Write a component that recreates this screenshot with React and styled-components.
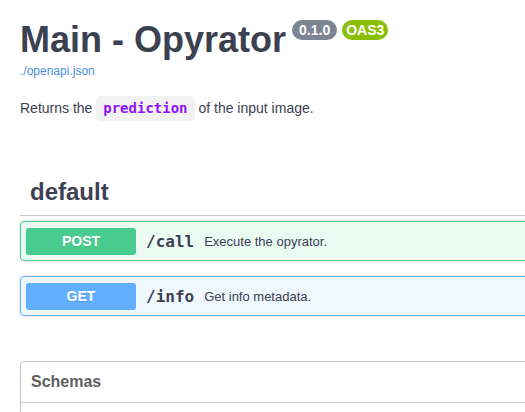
import React from "react";
import styled, { createGlobalStyle } from "styled-components";

const GlobalStyle = createGlobalStyle`
    html, body {
        margin: 0;
        padding: 0;
        background: #fff;
        overflow: hidden;
    }
    body {
        font-family: "Liberation Sans", Arial, sans-serif;
        color: #3b4151;
    }
`;

const Page = styled.div`
    width: 640px;
    padding: 0 20px;
    box-sizing: border-box;
`;

const Info = styled.div`
    padding-top: 20px;
`;

const Title = styled.h2`
    margin: 0;
    font-size: 36px;
    font-weight: 700;
    line-height: 40px;
    color: #3b4151;
    display: flex;
    align-items: flex-start;
`;

const Badge = styled.span`
    display: inline-block;
    margin: 0 0 0 5px;
    padding: 0 ${(props) => props.pad}px;
    height: 20px;
    line-height: 20px;
    border-radius: 57px;
    background: ${(props) => props.bg};
    color: #fff;
    font-size: 14px;
    font-weight: 700;
`;

const SpecLink = styled.a`
    display: block;
    margin-top: 4px;
    font-size: 12px;
    color: #4990e2;
    text-decoration: none;
`;

const Description = styled.p`
    margin: 18px 0 0;
    font-size: 14px;
    line-height: 25px;
    color: #3b4151;
`;

const Code = styled.code`
    display: inline-block;
    padding: 0 7px;
    border-radius: 4px;
    background: rgba(0, 0, 0, 0.05);
    color: #9012fe;
    font-family: "DejaVu Sans Mono", monospace;
    font-weight: 700;
    font-size: 14px;
    line-height: 25px;
`;

const Tag = styled.section`
    margin-top: 48px;
`;

const TagHeading = styled.h3`
    margin: 0;
    padding: 0 10px;
    height: 46px;
    display: flex;
    align-items: center;
    font-size: 24px;
    font-weight: 700;
    color: #3b4151;
    border-bottom: 1px solid rgba(59, 65, 81, 0.3);
`;

const Operations = styled.div`
    padding-top: 5px;
    display: flex;
    flex-direction: column;
    gap: 15px;
`;

const Opblock = styled.div`
    display: flex;
    align-items: center;
    height: 40px;
    box-sizing: border-box;
    padding: 0 5px;
    border: 1px solid ${(props) => props.color};
    border-radius: 4px;
    background: ${(props) => props.tint};
    box-shadow: 0 0 3px rgba(0, 0, 0, 0.19);
`;

const Method = styled.span`
    width: 110px;
    height: 27px;
    border-radius: 3px;
    background: ${(props) => props.color};
    color: #fff;
    font-size: 14px;
    font-weight: 700;
    display: flex;
    align-items: center;
    justify-content: center;
    text-shadow: 0 1px 0 rgba(0, 0, 0, 0.1);
`;

const Path = styled.span`
    margin-left: 10px;
    font-family: "DejaVu Sans Mono", monospace;
    font-size: 16px;
    font-weight: 700;
    color: #3b4151;
`;

const Summary = styled.span`
    margin-left: 10px;
    font-size: 13px;
    color: #3b4151;
`;

const Models = styled.section`
    margin-top: 45px;
    border: 1px solid rgba(59, 65, 81, 0.3);
    border-radius: 4px;
`;

const ModelsHeader = styled.h4`
    margin: 0;
    height: 40px;
    padding: 0 10px;
    display: flex;
    align-items: center;
    font-size: 16px;
    font-weight: 700;
    color: #606060;
    border-bottom: 1px solid rgba(59, 65, 81, 0.3);
`;

const ModelsBody = styled.div`
    height: 40px;
`;

const ops = [
    { method: "POST", path: "/call", summary: "Execute the opyrator.", color: "#49cc90", tint: "rgba(73, 204, 144, 0.1)" },
    { method: "GET", path: "/info", summary: "Get info metadata.", color: "#61affe", tint: "rgba(97, 175, 254, 0.1)" },
];

export default function App() {
    return (
        <>
            <GlobalStyle />
            <Page>
                <Info>
                    <Title>
                        Main - Opyrator
                        <Badge bg="#7d8492" pad={7} style={{ marginLeft: 6 }}>0.1.0</Badge>
                        <Badge bg="#89bf04" pad={4}>OAS3</Badge>
                    </Title>
                    <SpecLink href="#">./openapi.json</SpecLink>
                    <Description>
                        Returns the <Code>prediction</Code> of the input image.
                    </Description>
                </Info>
                <Tag>
                    <TagHeading>default</TagHeading>
                    <Operations>
                        {ops.map((op) => (
                            <Opblock key={op.path} color={op.color} tint={op.tint}>
                                <Method color={op.color}>{op.method}</Method>
                                <Path>{op.path}</Path>
                                <Summary>{op.summary}</Summary>
                            </Opblock>
                        ))}
                    </Operations>
                </Tag>
                <Models>
                    <ModelsHeader>Schemas</ModelsHeader>
                    <ModelsBody />
                </Models>
            </Page>
        </>
    );
}
